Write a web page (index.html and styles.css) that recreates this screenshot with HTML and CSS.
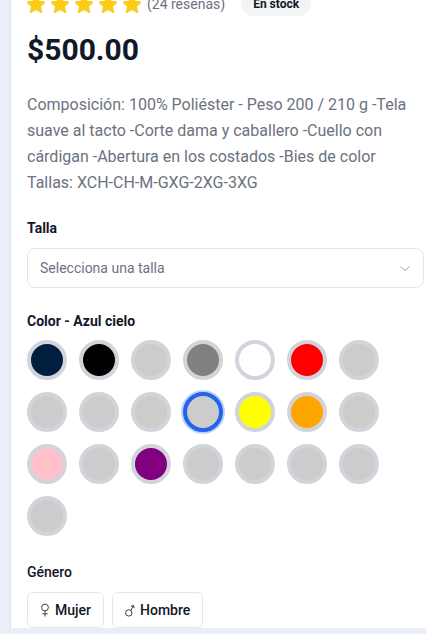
FILE: index.html
```html
<!DOCTYPE html>
<html lang="es">
<head>
<meta charset="utf-8">
<title>Producto</title>
<link rel="stylesheet" href="styles.css">
</head>
<body>
<div class="panel">
  <div class="rating-row">
    <div class="stars">
      <svg class="star" viewBox="2 1.5 20 20"><polygon points="12,2 15.09,8.26 22,9.27 17,14.14 18.18,21.02 12,17.77 5.82,21.02 7,14.14 2,9.27 8.91,8.26"/></svg>
      <svg class="star" viewBox="2 1.5 20 20"><polygon points="12,2 15.09,8.26 22,9.27 17,14.14 18.18,21.02 12,17.77 5.82,21.02 7,14.14 2,9.27 8.91,8.26"/></svg>
      <svg class="star" viewBox="2 1.5 20 20"><polygon points="12,2 15.09,8.26 22,9.27 17,14.14 18.18,21.02 12,17.77 5.82,21.02 7,14.14 2,9.27 8.91,8.26"/></svg>
      <svg class="star" viewBox="2 1.5 20 20"><polygon points="12,2 15.09,8.26 22,9.27 17,14.14 18.18,21.02 12,17.77 5.82,21.02 7,14.14 2,9.27 8.91,8.26"/></svg>
      <svg class="star" viewBox="2 1.5 20 20"><polygon points="12,2 15.09,8.26 22,9.27 17,14.14 18.18,21.02 12,17.77 5.82,21.02 7,14.14 2,9.27 8.91,8.26"/></svg>
    </div>
    <span class="reviews">(24 reseñas)</span>
    <span class="badge">En stock</span>
  </div>

  <div class="price">$500.00</div>

  <p class="desc">Composición: 100% Poliéster - Peso 200 / 210 g -Tela suave al tacto -Corte dama y caballero -Cuello con cárdigan -Abertura en los costados -Bies de color<br>Tallas: XCH-CH-M-GXG-2XG-3XG</p>

  <div class="label label-talla">Talla</div>
  <div class="select">
    <span class="select-text">Selecciona una talla</span>
    <svg class="chevron" viewBox="0 0 10 5"><polyline points="0.5,0.5 5,4.5 9.5,0.5"/></svg>
  </div>

  <div class="label label-color">Color - Azul cielo</div>
  <div class="swatches">
    <span class="swatch" style="background:#001f3f"></span>
    <span class="swatch" style="background:#000000"></span>
    <span class="swatch" style="background:#cccccc"></span>
    <span class="swatch" style="background:#808080"></span>
    <span class="swatch" style="background:#ffffff"></span>
    <span class="swatch" style="background:#ff0000"></span>
    <span class="swatch" style="background:#cccccc"></span>
    <span class="swatch" style="background:#cccccc"></span>
    <span class="swatch" style="background:#cccccc"></span>
    <span class="swatch" style="background:#cccccc"></span>
    <span class="swatch selected" style="background:#cccccc"></span>
    <span class="swatch" style="background:#ffff00"></span>
    <span class="swatch" style="background:#ffa500"></span>
    <span class="swatch" style="background:#cccccc"></span>
    <span class="swatch" style="background:#ffc0cb"></span>
    <span class="swatch" style="background:#cccccc"></span>
    <span class="swatch" style="background:#800080"></span>
    <span class="swatch" style="background:#cccccc"></span>
    <span class="swatch" style="background:#cccccc"></span>
    <span class="swatch" style="background:#cccccc"></span>
    <span class="swatch" style="background:#cccccc"></span>
    <span class="swatch" style="background:#cccccc"></span>
  </div>

  <div class="label label-genero">Género</div>
  <div class="genders">
    <button class="gender-btn">
      <svg class="gicon" viewBox="0 0 10 14"><circle cx="5" cy="4.5" r="3.4"/><line x1="5" y1="7.9" x2="5" y2="13.5"/><line x1="2.4" y1="10.8" x2="7.6" y2="10.8"/></svg>
      Mujer
    </button>
    <button class="gender-btn">
      <svg class="gicon" viewBox="0 0 10 14"><circle cx="3.8" cy="9.9" r="3.2"/><line x1="5.9" y1="7.5" x2="8.4" y2="2.6"/><polyline points="5.9,3.4 8.5,2.4 9.1,5.1"/></svg>
      Hombre
    </button>
  </div>
</div>
</body>
</html>
```
FILE: styles.css
```css
html, body {
  margin: 0;
  padding: 0;
  height: 100%;
  overflow: hidden;
}
body {
  background: #eaeff7;
  font-family: Roboto, "Liberation Sans", Arial, sans-serif;
  color: #111827;
}
.panel {
  margin-left: 10px;
  min-height: 100%;
  background: #ffffff;
  border-left: 1px solid #dde3ec;
  padding: 0 2px 0 16px;
  box-sizing: border-box;
}
.rating-row {
  display: flex;
  align-items: center;
  margin-top: -8px;
  height: 24px;
}
.stars {
  display: flex;
  gap: 6px;
}
.star {
  width: 18px;
  height: 18px;
  display: block;
}
.star polygon {
  fill: #facc15;
  stroke: #facc15;
  stroke-width: 1.2;
  stroke-linejoin: round;
}
.reviews {
  margin-left: 6px;
  font-size: 14px;
  line-height: 20px;
  color: #6b7280;
}
.badge {
  margin-left: 16px;
  background: #f3f4f6;
  border-radius: 999px;
  padding: 4px 12px;
  font-size: 12px;
  line-height: 16px;
  font-weight: 700;
  color: #111827;
}
.price {
  margin-top: 16px;
  font-size: 30px;
  line-height: 36px;
  font-weight: 700;
  color: #111827;
}
.desc {
  margin: 24px 0 0;
  font-size: 16px;
  line-height: 26px;
  color: #6b7280;
}
.label {
  font-size: 14px;
  line-height: 20px;
  font-weight: 700;
  color: #111827;
}
.label-talla {
  margin-top: 22px;
  margin-bottom: 10px;
}
.label-color {
  margin-top: 23px;
  margin-bottom: 9px;
}
.label-genero {
  margin-top: 26px;
  margin-bottom: 10px;
  font-weight: 500;
}
.select {
  height: 40px;
  box-sizing: border-box;
  border: 1px solid #e5e7eb;
  border-radius: 8px;
  display: flex;
  align-items: center;
  justify-content: space-between;
  padding: 0 13px 0 12px;
}
.select-text {
  font-size: 14px;
  color: #6b7280;
}
.chevron {
  width: 10px;
  height: 5px;
  display: block;
}
.chevron polyline {
  fill: none;
  stroke: #9ca3af;
  stroke-width: 1;
}
.swatches {
  display: flex;
  flex-wrap: wrap;
  gap: 12px;
}
.swatch {
  width: 40px;
  height: 40px;
  box-sizing: border-box;
  border-radius: 50%;
  border: 4px solid #d1d5db;
  display: block;
}
.swatch.selected {
  border-color: #2563eb;
  box-shadow: 0 0 0 2px rgba(59, 130, 246, 0.35);
}
.genders {
  display: flex;
  gap: 8px;
}
.gender-btn {
  height: 36px;
  box-sizing: border-box;
  border: 1px solid #e5e7eb;
  border-radius: 6px;
  background: #ffffff;
  padding: 0 12px;
  display: flex;
  align-items: center;
  gap: 5px;
  font-family: Roboto, "Liberation Sans", Arial, sans-serif;
  font-size: 14px;
  font-weight: 500;
  color: #111827;
}
.gicon {
  width: 10px;
  height: 14px;
  display: block;
  fill: none;
  stroke: #374151;
  stroke-width: 1;
}
```
